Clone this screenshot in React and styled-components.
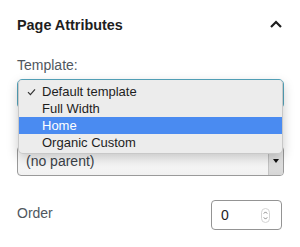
import React from 'react';
import styled, {createGlobalStyle} from 'styled-components';

const templates = ["Default template", "Full Width", "Home", "Organic Custom"];

function App () {
    const selected = 0
    const hovered = 2

    return (
        <PANEL>
            <GlobalStyle/>
            <HEADER>
                <TITLE>Page Attributes</TITLE>
                <CHEVRON viewBox="0 0 24 24" width="24" height="24">
                    <polyline points="7,14 12,9 17,14" fill="none" stroke="#1e1e1e" strokeWidth="2.2"/>
                </CHEVRON>
            </HEADER>

            <LABEL>Template:</LABEL>
            <SELECT_FOCUSED>
                <MENU>
                    {templates.map((name, key) =>
                        <ITEM key={key} active={key === hovered}>
                            <CHECK_CELL>
                                {key === selected &&
                                <svg width="9" height="8" viewBox="0 0 9 8">
                                    <polyline points="1,4.2 3.4,6.6 8,1.4" fill="none" stroke="#333" strokeWidth="1.2"/>
                                </svg>}
                            </CHECK_CELL>
                            {name}
                        </ITEM>)}
                </MENU>
            </SELECT_FOCUSED>

            {/* parent label sits under the open menu */}
            <HIDDEN_GAP/>
            <SELECT>
                <SELECT_TEXT>(no parent)</SELECT_TEXT>
                <ARROW_BOX>
                    <svg width="6" height="4" viewBox="0 0 6 4">
                        <polygon points="0,0 6,0 3,4" fill="#111"/>
                    </svg>
                </ARROW_BOX>
            </SELECT>

            <ROW>
                <ROW_LABEL>Order</ROW_LABEL>
                <NUMBER>
                    <NUMBER_VALUE>0</NUMBER_VALUE>
                    <svg width="9" height="15" viewBox="0 0 9 15">
                        <rect x="0.5" y="0.5" width="8" height="14" rx="4" fill="none" stroke="#d4d4d4"/>
                        <polyline points="2.8,5.6 4.5,3.9 6.2,5.6" fill="none" stroke="#777" strokeWidth="0.9"/>
                        <polyline points="2.8,9.4 4.5,11.1 6.2,9.4" fill="none" stroke="#777" strokeWidth="0.9"/>
                    </svg>
                </NUMBER>
            </ROW>
        </PANEL>
    )
}

export default App;

const GlobalStyle = createGlobalStyle `
body {
    margin:0;
    background:#fff;
    font-family:"Liberation Sans", Arial, sans-serif;
}`

const PANEL = styled.div `
width:300px;
height:247px;
box-sizing:border-box;
padding:15px 16px 0 17px;
overflow:hidden;`

const HEADER = styled.div `
display:flex;
justify-content:space-between;
align-items:center;
height:20px;
margin-bottom:20px;`

const TITLE = styled.div `
font-size:14.4px;
font-weight:bold;
line-height:20px;
color:#1e1e1e;`

const CHEVRON = styled.svg `
margin-right:-4px;
flex-shrink:0;`

const LABEL = styled.div `
font-size:14px;
line-height:20px;
color:#50575e;
margin-bottom:4px;`

const HIDDEN_GAP = styled.div `
height:37px;`

const SELECT_FOCUSED = styled.div `
position:relative;
height:30px;
box-sizing:border-box;
border:1px solid #56a6be;
border-radius:5px;
background:#fff;
z-index:2;`

const MENU = styled.div `
position:absolute;
top:0;
left:0;
right:0;
padding:3px 0 2px;
background:#ececec;
border:1px solid #c8c8c8;
border-top:none;
border-radius:4px 4px 5px 5px;
box-shadow:0 4px 12px rgba(0,0,0,0.22);`

const ITEM = styled.div `
display:flex;
align-items:center;
height:17px;
font-size:13px;
color:${props => props.active ? '#fff' : '#1e1e1e'};
background:${props => props.active ? '#4a8bf1' : 'transparent'};`

const CHECK_CELL = styled.div `
width:23px;
display:flex;
justify-content:flex-end;
padding-right:6px;
box-sizing:border-box;`

const SELECT = styled.div `
display:flex;
align-items:center;
justify-content:space-between;
height:30px;
box-sizing:border-box;
border:1px solid #9a9a9a;
border-radius:4px;
background:linear-gradient(#ffffff, #f1f1f1);
overflow:hidden;`

const SELECT_TEXT = styled.div `
padding-left:8px;
font-size:14px;
color:#3c434a;`

const ARROW_BOX = styled.div `
align-self:stretch;
width:15px;
display:flex;
justify-content:center;
padding-top:12px;
box-sizing:border-box;
border-left:1px solid #c4c4c4;
background:linear-gradient(#ececec, #d6d6d6);`

const ROW = styled.div `
display:flex;
justify-content:space-between;
align-items:flex-start;
margin-top:24px;`

const ROW_LABEL = styled.div `
padding-top:3px;
font-size:14px;
line-height:20px;
color:#50575e;`

const NUMBER = styled.div `
display:flex;
align-items:center;
justify-content:space-between;
width:71px;
height:30px;
margin-right:2px;
box-sizing:border-box;
padding:0 11px 0 9px;
border:1px solid #949494;
border-radius:4px;`

const NUMBER_VALUE = styled.div `
font-size:14px;
color:#1e1e1e;`
